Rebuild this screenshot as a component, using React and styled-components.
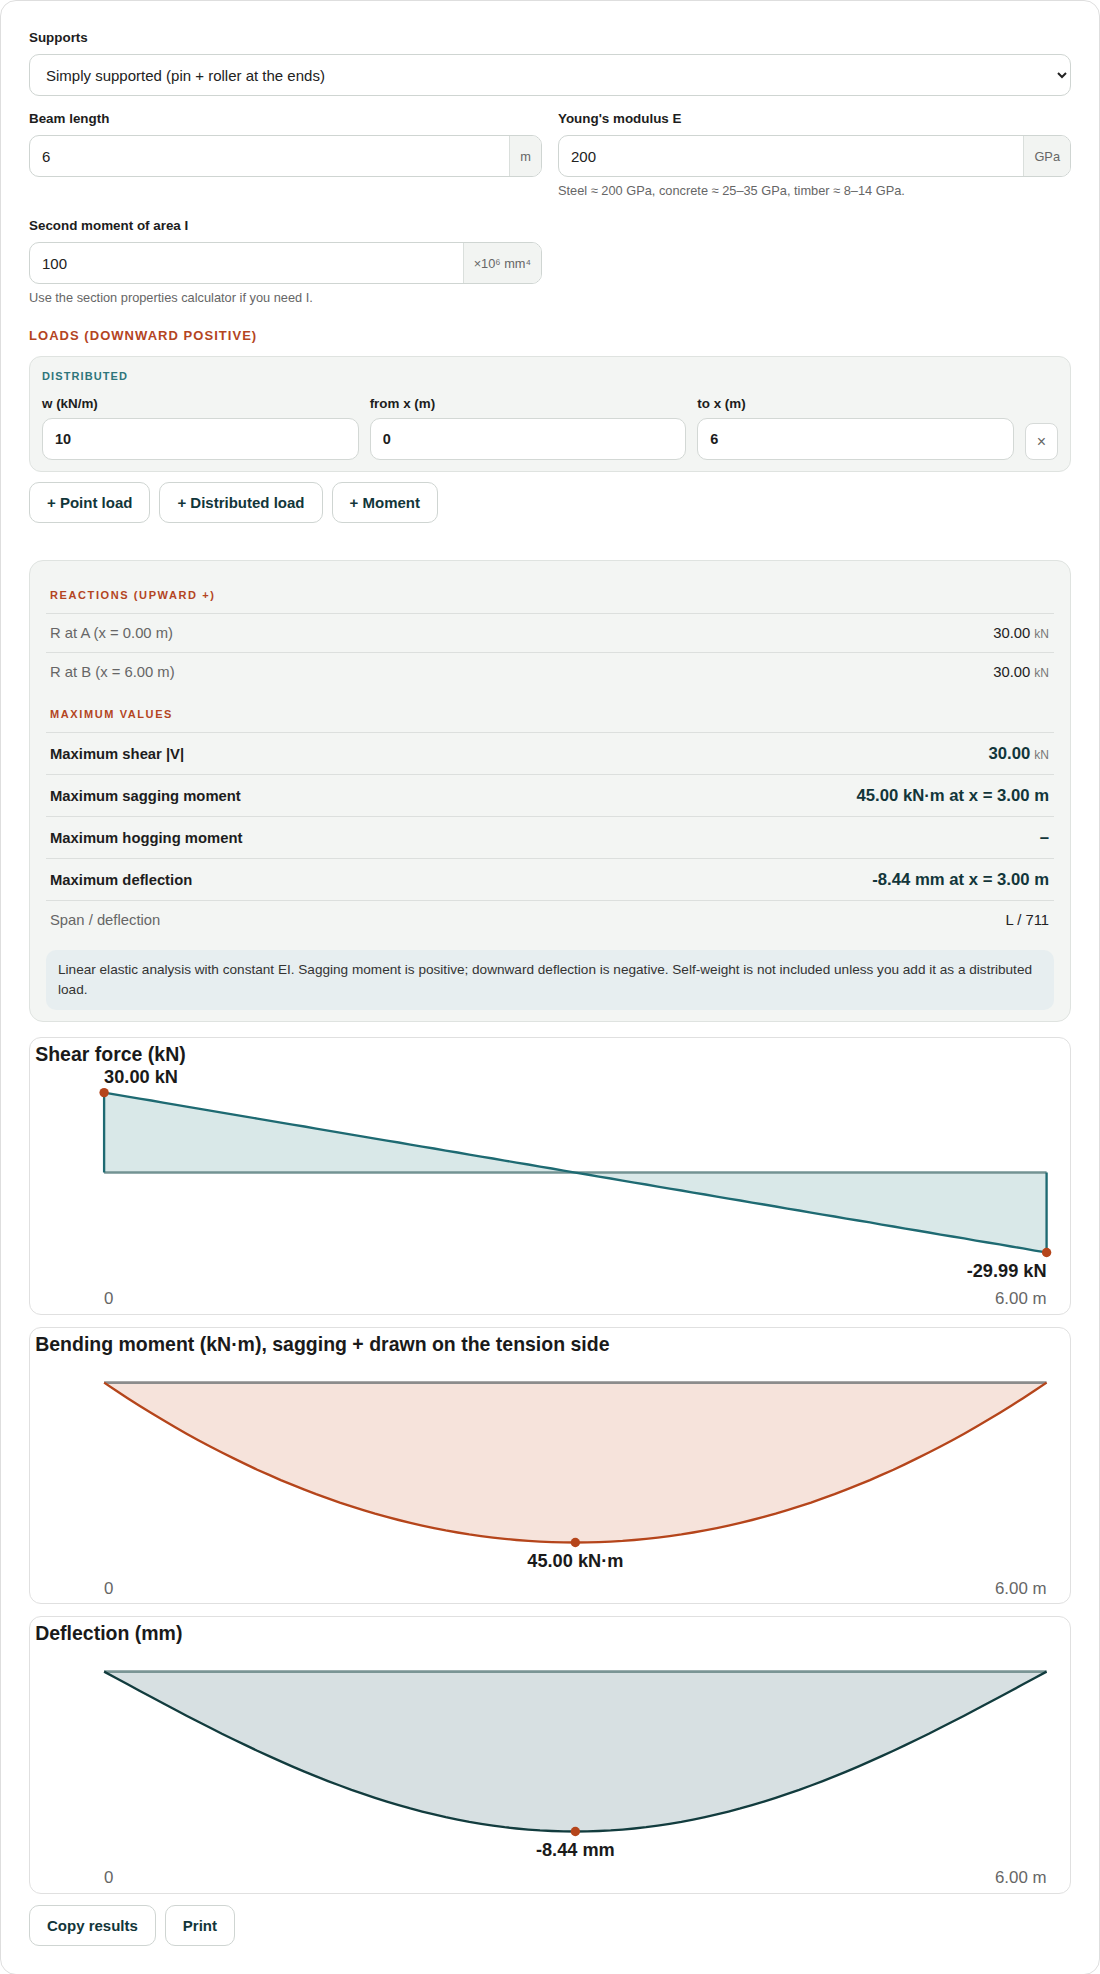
import React, { useState } from 'react'
import styled, { createGlobalStyle } from 'styled-components'

const GlobalStyle = createGlobalStyle`
    * { box-sizing: border-box; }
    body {
        margin: 0;
        background: #fff;
        font-family: "Liberation Sans", Arial, sans-serif;
        color: #1d1d1d;
    }
`

const Card = styled.div`
    border: 1px solid #dedede;
    border-radius: 16px;
    padding: 28px;
    background: #fff;
`

const Label = styled.label`
    display: block;
    font-size: 13.4px;
    line-height: 18px;
    font-weight: 700;
    color: #1d1d1d;
    margin-bottom: 7px;
`

const Select = styled.select`
    width: 100%;
    height: 42px;
    border: 1px solid #cfd5d2;
    border-radius: 10px;
    background: #fff;
    padding: 0 12px;
    font-family: inherit;
    font-size: 15px;
    color: #222;
`

const FieldRow = styled.div`
    display: grid;
    grid-template-columns: 1fr 1fr;
    gap: 16px;
    margin-top: ${(props) => props.top || 14}px;
`

const InputGroup = styled.div`
    display: flex;
    height: 42px;
    border: 1px solid #cfd5d2;
    border-radius: 10px;
    overflow: hidden;
    background: #fff;
`

const Input = styled.input`
    flex: 1;
    min-width: 0;
    border: none;
    outline: none;
    padding: 0 12px;
    font-family: inherit;
    font-size: 15px;
    color: #222;
    background: transparent;
`

const Addon = styled.span`
    display: flex;
    align-items: center;
    padding: 0 10px;
    border-left: 1px solid #dadfdc;
    background: #f2f4f2;
    font-size: 12.8px;
    color: #666;
`

const Hint = styled.div`
    font-size: 12.8px;
    line-height: 18px;
    color: #666;
    margin-top: 5px;
`

const SectionTitle = styled.div`
    margin-top: 20px;
    font-size: 13px;
    line-height: 18px;
    font-weight: 700;
    letter-spacing: 0.08em;
    text-transform: uppercase;
    color: #b4451f;
`

const LoadBox = styled.div`
    margin-top: 11px;
    background: #f3f5f3;
    border: 1px solid #dfe3e0;
    border-radius: 12px;
    padding: 12px 12px 11px;
`

const LoadKind = styled.div`
    font-size: 11px;
    line-height: 14px;
    font-weight: 700;
    letter-spacing: 0.1em;
    text-transform: uppercase;
    color: #2e757b;
    margin-bottom: 13px;
`

const LoadGrid = styled.div`
    display: grid;
    grid-template-columns: 1fr 1fr 1fr 33px;
    gap: 11px;
    align-items: end;
`

const LoadLabel = styled.label`
    display: block;
    font-size: 13.4px;
    line-height: 16px;
    font-weight: 700;
    margin-bottom: 6px;
`

const LoadInput = styled.input`
    width: 100%;
    height: 42px;
    border: 1px solid #d3d8d5;
    border-radius: 10px;
    padding: 0 12px;
    font-family: inherit;
    font-size: 14.5px;
    font-weight: 700;
    color: #1d1d1d;
    background: #fff;
    outline: none;
`

const RemoveButton = styled.button`
    height: 37px;
    width: 33px;
    border: 1px solid #d6dad8;
    border-radius: 8px;
    background: #fff;
    color: #666;
    font-family: inherit;
    font-size: 16px;
    padding: 0;
    cursor: pointer;
`

const ButtonRow = styled.div`
    display: flex;
    gap: 9px;
    margin-top: ${(props) => props.top}px;
`

const Button = styled.button`
    height: 41px;
    padding: 0 17px;
    border: 1px solid #cfd5d2;
    border-radius: 10px;
    background: #fff;
    font-family: inherit;
    font-size: 15px;
    font-weight: 700;
    color: #12363a;
    cursor: pointer;
`

const Results = styled.div`
    margin-top: 37px;
    background: #f3f5f3;
    border: 1px solid #dfe3e0;
    border-radius: 14px;
    padding: 12px 16px 11px;
`

const GroupHead = styled.div`
    padding: ${(props) => (props.first ? 15 : 16)}px 4px 11px;
    font-size: 11px;
    line-height: 14px;
    font-weight: 700;
    letter-spacing: 1.6px;
    text-transform: uppercase;
    color: #b4451f;
`

const Row = styled.div`
    display: flex;
    justify-content: space-between;
    align-items: center;
    border-top: 1px solid #dcdfdd;
    padding: ${(props) => (props.strong ? '10px 5px 10px 4px' : '9px 5px 9px 4px')};
    height: ${(props) => (props.strong ? 42 : 39)}px;
    line-height: 20px;
`

const RowLabel = styled.span`
    font-size: 14.8px;
    font-weight: ${(props) => (props.strong ? 700 : 400)};
    color: ${(props) => (props.strong ? '#1d1d1d' : '#666')};
`

const RowValue = styled.span`
    font-size: ${(props) => (props.strong ? 16.7 : 14.8)}px;
    font-weight: ${(props) => (props.strong ? 700 : 400)};
    color: ${(props) => (props.strong ? '#12363a' : '#222')};
`

const Unit = styled.span`
    font-size: 12px;
    line-height: 1;
    font-weight: 400;
    color: #777;
    margin-left: 4px;
`

const Note = styled.div`
    margin-top: 11px;
    background: #e7eef0;
    border-radius: 10px;
    padding: 10px 12px;
    font-size: 13.6px;
    line-height: 20px;
    color: #333;
`

const ChartCard = styled.div`
    margin-top: ${(props) => props.top}px;
    border: 1px solid #e0e0e0;
    border-radius: 12px;
    background: #fff;
    overflow: hidden;

    svg {
        display: block;
        width: 100%;
        height: auto;
    }
`

const X0 = 57
const X1 = 782
const TOP = 42
const BOTTOM = 165

function Chart({ title, fn, min, max, colors, labels, top }) {
    const n = 80
    const span = max - min
    const zeroY = TOP + ((max - 0) / span) * (BOTTOM - TOP)
    const pts = []
    for (let i = 0; i <= n; i++) {
        const t = i / n
        const x = X0 + t * (X1 - X0)
        const y = TOP + ((max - fn(t)) / span) * (BOTTOM - TOP)
        pts.push([x, y])
    }
    const line = pts.map((p, i) => (i ? 'L' : 'M') + p[0].toFixed(1) + ',' + p[1].toFixed(1)).join(' ')
    const outline = `M${X0},${zeroY} ` + line.replace(/^M/, 'L') + ` L${X1},${zeroY}`
    return (
        <ChartCard top={top}>
            <svg viewBox="0 0 800 212">
                <text x="4" y="18" fontSize="15" fontWeight="700" fill="#1a1a1a">{title}</text>
                <path d={outline + ' Z'} fill={colors.fill} stroke="none" />
                <line x1={X0} y1={zeroY} x2={X1} y2={zeroY} stroke={colors.axis} strokeWidth="2" />
                <path d={outline} fill="none" stroke={colors.stroke} strokeWidth="1.8" />
                {labels.map((l) => (
                    <g key={l.text}>
                        <circle cx={l.x} cy={l.y} r="3.6" fill="#b5451b" />
                        <text x={l.x} y={l.ty} fontSize="14" fontWeight="700" fill="#1a1a1a" textAnchor={l.anchor}>
                            {l.text}
                        </text>
                    </g>
                ))}
                <text x={X0} y="205" fontSize="13" fill="#666">0</text>
                <text x={X1} y="205" fontSize="13" fill="#666" textAnchor="end">6.00 m</text>
            </svg>
        </ChartCard>
    )
}

export default function App() {
    const [support, setSupport] = useState('simple')
    const L = 6
    const w = 10
    const EI = 200e9 * 100e-6 / 1000 // kN·m²
    const R = (w * L) / 2
    const Mmax = (w * L * L) / 8
    const dmax = ((5 * w * Math.pow(L, 4)) / (384 * EI)) * 1000
    const mid = (X0 + X1) / 2

    return (
        <Card>
            <GlobalStyle />
            <Label>Supports</Label>
            <Select value={support} onChange={(e) => setSupport(e.target.value)}>
                <option value="simple">Simply supported (pin + roller at the ends)</option>
                <option value="cant">Cantilever (fixed at A)</option>
                <option value="fixed">Fixed at both ends</option>
            </Select>

            <FieldRow>
                <div>
                    <Label>Beam length</Label>
                    <InputGroup>
                        <Input defaultValue="6" />
                        <Addon>m</Addon>
                    </InputGroup>
                </div>
                <div>
                    <Label>Young's modulus E</Label>
                    <InputGroup>
                        <Input defaultValue="200" />
                        <Addon>GPa</Addon>
                    </InputGroup>
                    <Hint>Steel ≈ 200 GPa, concrete ≈ 25–35 GPa, timber ≈ 8–14 GPa.</Hint>
                </div>
            </FieldRow>

            <FieldRow top={17}>
                <div>
                    <Label>Second moment of area I</Label>
                    <InputGroup>
                        <Input defaultValue="100" />
                        <Addon>×10⁶ mm⁴</Addon>
                    </InputGroup>
                    <Hint>Use the section properties calculator if you need I.</Hint>
                </div>
            </FieldRow>

            <SectionTitle>Loads (downward positive)</SectionTitle>
            <LoadBox>
                <LoadKind>Distributed</LoadKind>
                <LoadGrid>
                    <div>
                        <LoadLabel>w (kN/m)</LoadLabel>
                        <LoadInput defaultValue="10" />
                    </div>
                    <div>
                        <LoadLabel>from x (m)</LoadLabel>
                        <LoadInput defaultValue="0" />
                    </div>
                    <div>
                        <LoadLabel>to x (m)</LoadLabel>
                        <LoadInput defaultValue="6" />
                    </div>
                    <RemoveButton>×</RemoveButton>
                </LoadGrid>
            </LoadBox>
            <ButtonRow top={10}>
                <Button>+ Point load</Button>
                <Button>+ Distributed load</Button>
                <Button>+ Moment</Button>
            </ButtonRow>

            <Results>
                <GroupHead first>Reactions (upward +)</GroupHead>
                <Row>
                    <RowLabel>R at A (x = 0.00 m)</RowLabel>
                    <RowValue>{R.toFixed(2)}<Unit>kN</Unit></RowValue>
                </Row>
                <Row>
                    <RowLabel>R at B (x = 6.00 m)</RowLabel>
                    <RowValue>{R.toFixed(2)}<Unit>kN</Unit></RowValue>
                </Row>
                <GroupHead>Maximum values</GroupHead>
                <Row strong>
                    <RowLabel strong>Maximum shear |V|</RowLabel>
                    <RowValue strong>{R.toFixed(2)}<Unit>kN</Unit></RowValue>
                </Row>
                <Row strong>
                    <RowLabel strong>Maximum sagging moment</RowLabel>
                    <RowValue strong>{Mmax.toFixed(2)} kN·m at x = 3.00 m</RowValue>
                </Row>
                <Row strong>
                    <RowLabel strong>Maximum hogging moment</RowLabel>
                    <RowValue strong>–</RowValue>
                </Row>
                <Row strong>
                    <RowLabel strong>Maximum deflection</RowLabel>
                    <RowValue strong>-{dmax.toFixed(2)} mm at x = 3.00 m</RowValue>
                </Row>
                <Row>
                    <RowLabel>Span / deflection</RowLabel>
                    <RowValue>L / {Math.floor((L * 1000) / dmax)}</RowValue>
                </Row>
                <Note>
                    Linear elastic analysis with constant EI. Sagging moment is positive; downward deflection is
                    negative. Self-weight is not included unless you add it as a distributed load.
                </Note>
            </Results>

            <Chart
                top={15}
                title="Shear force (kN)"
                fn={(t) => R - w * t * L}
                min={-30}
                max={30}
                colors={{ fill: '#d9e8e8', stroke: '#1e6a72', axis: '#739393' }}
                labels={[
                    { x: X0, y: TOP, ty: 35, text: '30.00 kN', anchor: 'start' },
                    { x: X1, y: BOTTOM, ty: 183.5, text: '-29.99 kN', anchor: 'end' },
                ]}
            />
            <Chart
                top={12}
                title="Bending moment (kN·m), sagging + drawn on the tension side"
                fn={(t) => -(R * t * L - (w * t * L * t * L) / 2)}
                min={-Mmax}
                max={0}
                colors={{ fill: '#f6e3db', stroke: '#b5451b', axis: '#8c8c8c' }}
                labels={[{ x: mid, y: BOTTOM, ty: 183.5, text: '45.00 kN·m', anchor: 'middle' }]}
            />
            <Chart
                top={12}
                title="Deflection (mm)"
                fn={(t) => -(t * (1 - 2 * t * t + t * t * t)) / 0.3125}
                min={-1}
                max={0}
                colors={{ fill: '#d7e0e2', stroke: '#123c3e', axis: '#7a9595' }}
                labels={[{ x: mid, y: BOTTOM, ty: 183.5, text: '-8.44 mm', anchor: 'middle' }]}
            />

            <ButtonRow top={11}>
                <Button>Copy results</Button>
                <Button>Print</Button>
            </ButtonRow>
        </Card>
    )
}
